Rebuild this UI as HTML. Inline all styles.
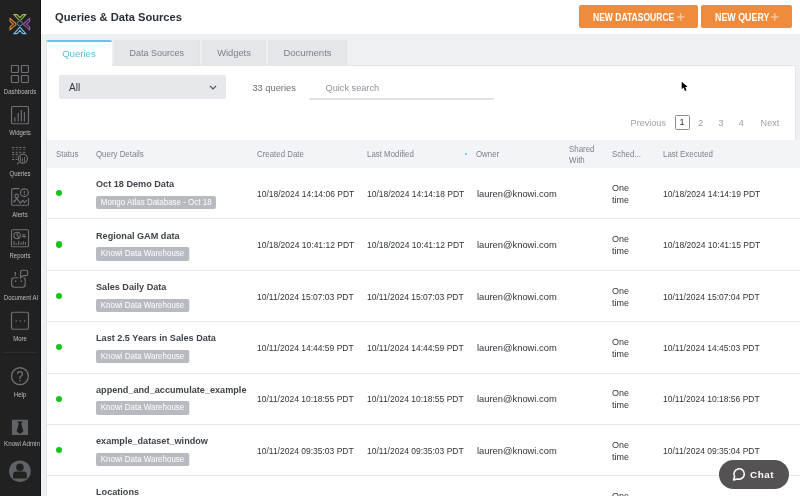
<!DOCTYPE html>
<html><head><meta charset="utf-8">
<style>
*{box-sizing:border-box;margin:0;padding:0}
html,body{width:800px;height:496px;overflow:hidden;background:#fff;font-family:"Liberation Sans",sans-serif;}
.abs{position:absolute}
#side{position:absolute;left:0;top:0;width:41px;height:496px;background:#212121}
.lbl{position:absolute;left:0;width:40px;text-align:center;color:#bdbdbd;font-size:6.6px;line-height:8px;white-space:nowrap;transform:scaleX(0.91)}
#hdr{position:absolute;left:41px;top:0;width:759px;height:34px;background:#fff}
#title{position:absolute;left:55px;top:8.6px;font-size:11.15px;font-weight:bold;color:#2b2f36;white-space:nowrap;line-height:16px}
.obtn{position:absolute;top:5.3px;height:23px;background:#ef8b3b;border-radius:2px;color:#fff;font-weight:bold;font-size:10.2px;line-height:26.8px;white-space:nowrap}
.obtn span.t{display:inline-block;transform:scaleX(0.838);transform-origin:0 50%}
.obtn .pl{color:#f6c39a;font-size:11px;font-weight:bold}
#band{position:absolute;left:41px;top:34px;width:759px;height:462px;background:#eef0f2}
#panel{position:absolute;left:45.9px;top:65px;width:749.9px;height:445px;background:#fff;border:1px solid #e2e4e8;border-radius:2px}
#pext{position:absolute;left:780px;top:140px;width:20px;height:356px;background:#fff}
.tab{position:absolute;top:40px;height:25px;background:#e5e6e9;color:#7b7f86;font-size:9px;line-height:25px;text-align:center;white-space:nowrap}
.tab{border-left:1px solid #e0e2e6;border-right:1px solid #e0e2e6}
.tab.act{background:#fff;color:#5bbce4;border-top:2px solid #6ac4ea;line-height:23px;height:26px;border-left:1px solid #e2e4e8;border-right:0;border-top-left-radius:2px;border-top-right-radius:2px}
#sel{position:absolute;left:59px;top:75.3px;width:166.5px;height:23.5px;background:#e7e8eb;border-radius:2px}
#thead{position:absolute;left:46.5px;top:140px;width:753.5px;height:28px;background:#f3f4f8}
.th{position:absolute;color:#7c8188;font-size:8.4px;line-height:10px;white-space:nowrap;transform:scaleX(0.94);transform-origin:0 0}
.rb{position:absolute;left:46.5px;width:753.5px;height:1px;background:#e6e8ec}
.dot{position:absolute;left:55.65px;width:6.3px;height:6.3px;border-radius:50%;background:#1ac41a}
.qt{position:absolute;left:96px;font-size:9.6px;font-weight:bold;color:#3f444b;white-space:nowrap;line-height:12px;transform:scaleX(0.95);transform-origin:0 0}
.badge{position:absolute;left:96px;height:13.5px;background:#b7bac1;border-radius:2px;color:#fff;font-size:8.4px;line-height:13.5px;padding:0 5.05px;white-space:nowrap;transform:scaleX(0.952);transform-origin:0 0}
.td{position:absolute;color:#30343a;font-size:8.85px;line-height:12px;white-space:nowrap;transform:scaleX(0.96);transform-origin:0 0}
.em{font-size:9.6px;transform:scaleX(0.975)}
.one{font-size:9.9px;line-height:11.8px;transform:scaleX(0.91)}
#chat{position:absolute;left:719px;top:459.6px;width:70px;height:29.2px;border-radius:15px;background:#545252;color:#fff;font-weight:bold;font-size:10.7px}
#root{position:absolute;left:0;top:0;width:800px;height:496px;overflow:hidden;will-change:transform}
</style></head><body><div id="root">
<div id="side"></div>
<div class="abs" style="left:40px;top:0;width:1px;height:496px;background:#141414"></div>
<svg class="abs" style="left:0;top:0" width="41" height="496" viewBox="0 0 41 496">
<!-- logo -->
<g fill="none" stroke-width="1.1" stroke-linejoin="miter" stroke-miterlimit="3">
 <path d="M14.00 14.60 H17.00 L19.85 17.74 L22.70 14.60 H25.70 L19.85 21.04 Z" stroke="#a3c14f"/>
 <path d="M10.10 18.40 V21.30 L13.24 24.10 L10.10 26.90 V29.80 L16.48 24.10 Z" stroke="#ef9030"/>
 <path d="M29.60 18.40 V21.30 L26.46 24.10 L29.60 26.90 V29.80 L23.22 24.10 Z" stroke="#9b5cb4"/>
 <path d="M14.00 33.60 H17.00 L19.85 30.46 L22.70 33.60 H25.70 L19.85 27.16 Z" stroke="#78c2e6"/>
 <circle cx="19.85" cy="23.5" r="3.3" fill="#212121" stroke="none"/>
 <circle cx="19.85" cy="23.4" r="2.5" stroke="#5a88a8" stroke-width="1"/>
</g>
<g fill="#6e7176"><!-- queries grid -->
 <g><rect x="12.1" y="147" width="2.1" height="1.1" opacity="1"/><rect x="15.7" y="147" width="2.1" height="1.1" opacity="1"/><rect x="19.3" y="147" width="2.1" height="1.1" opacity="1"/><rect x="23.2" y="147" width="2.1" height="1.1" opacity="1"/>
<rect x="12.1" y="149.2" width="2.1" height="1.1" opacity="0.55"/><rect x="15.7" y="149.2" width="2.1" height="1.1" opacity="0.55"/><rect x="19.3" y="149.2" width="2.1" height="1.1" opacity="0.55"/><rect x="23.2" y="149.2" width="2.1" height="1.1" opacity="0.55"/>
<rect x="12.1" y="151.8" width="2.1" height="1.1" opacity="1"/><rect x="15.7" y="151.8" width="2.1" height="1.1" opacity="1"/><rect x="19.3" y="151.8" width="2.1" height="1.1" opacity="1"/><rect x="23.2" y="151.8" width="2.1" height="1.1" opacity="1"/>
<rect x="12.1" y="153.9" width="2.1" height="1.1" opacity="1"/><rect x="15.7" y="153.9" width="2.1" height="1.1" opacity="1"/>
<rect x="12.1" y="156.2" width="2.1" height="1.1" opacity="0.55"/><rect x="15.7" y="156.2" width="2.1" height="1.1" opacity="0.55"/>
<rect x="12.1" y="158.9" width="2.1" height="1.1" opacity="1"/><rect x="15.7" y="158.9" width="2.1" height="1.1" opacity="1"/>
 </g></g>
<g fill="none" stroke="#6e7176" stroke-width="1.15">
 <!-- dashboards -->
 <rect x="11.4" y="65.5" width="7" height="7" rx="0.8"/>
 <rect x="21.4" y="65.5" width="7" height="7" rx="0.8"/>
 <rect x="11.4" y="75.5" width="7" height="7" rx="0.8"/>
 <rect x="21.4" y="75.5" width="7" height="7" rx="0.8"/>
 <!-- widgets -->
 <rect x="11.5" y="106.5" width="17" height="17.2" rx="1.3"/>
 <path d="M14.8 121.6 V117.3 M18.2 121.6 V112.9 M21.3 121.6 V110 M24.4 121.6 V112.2"/>
 <!-- queries magnifier -->
 <circle cx="22.9" cy="158.6" r="5.3" fill="#212121" stroke="none"/><circle cx="22.9" cy="158.6" r="4.55"/>
 <path d="M18.8 162.4 L17.1 164.4"/>
 <path d="M20.35 161.6 V156.2 M22.45 161.6 V158.4 M24.55 161.6 V157.1" stroke-width="1"/>
 <!-- alerts -->
 <path d="M19.5 188.6 H13 Q11.7 188.6 11.7 189.9 V203.9 Q11.7 205.2 13 205.2 H27.2 Q28.5 205.2 28.5 203.9 V197.8"/>
 <circle cx="24.4" cy="192.7" r="3.9"/>
 <path d="M24.4 190.9 V193.2 M24.4 194.1 V195"/>
 <circle cx="16.65" cy="195.9" r="1.8"/>
 <path d="M13.4 200.6 L14.5 201.9 L16.65 198.1 L20.3 203.2 L22.8 200.5 L24.5 202.6 L26.6 200.2"/>
 <!-- reports -->
 <rect x="11.5" y="229.7" width="17" height="17" rx="1.3"/>
 <circle cx="17.1" cy="235.4" r="3.2"/>
 <path d="M17.1 232.2 V235.4 L19.2 237.8 M22.2 234.9 H25.2 M22.2 236.6 H26"/>
 <path d="M14.1 244.8 V241.3 M16.2 244.8 V243 M18.6 244.8 V241.3 M21.1 244.8 V242.2 M23.3 244.8 V241.3 M25.4 244.8 V241.9" stroke-width="1.1"/>
 <!-- document ai -->
 <path d="M18.6 277.7 H14.3 Q11.6 277.7 11.6 280.4 V284.6 Q11.6 287.2 14.3 287.2 H22.5 Q25.2 287.2 25.2 284.6 V280.4 Q25.2 277.7 23.5 277.7"/>
 <path d="M15.3 272.6 V276" stroke-width="1.1"/><path d="M14.6 272.7 H16" stroke-width="1.2"/>
 <path d="M20.6 277.9 V271.5 Q20.6 270.2 21.9 270.2 H26.3 Q27.6 270.2 27.6 271.5 V274.3 Q27.6 275.6 26.3 275.6 H23.1 Z"/>
 <!-- more -->
 <rect x="11.5" y="312.2" width="17" height="17" rx="1.6"/>
 <!-- help -->
 <circle cx="19.95" cy="376.2" r="8.45" stroke-width="1.3"/>
 <path d="M17.5 374 Q17.5 371.7 19.9 371.7 Q22.4 371.7 22.4 373.9 Q22.4 375.4 20.9 376.3 Q19.9 377 19.9 378.2 V379" stroke-width="1.3"/>
</g>
<g fill="#6e7176">
 
 <rect x="15.5" y="320.3" width="1.3" height="1.3"/><rect x="19.5" y="320.3" width="1.3" height="1.3"/><rect x="24" y="320.3" width="1.3" height="1.3"/>
 <rect x="14.75" y="280.4" width="1.5" height="1.5"/><rect x="20.55" y="280.4" width="1.5" height="1.5"/>
 <circle cx="19.9" cy="380.7" r="0.8"/>
</g>
<!-- separator -->
<rect x="3" y="351.8" width="34" height="0.9" fill="#343434"/>
<!-- knowi admin -->
<rect x="11.9" y="419.7" width="16.1" height="15.3" fill="#5f6266"/>
<path d="M17.4 421.6 H22.6 L21.2 423.6 L23.3 431.2 L20 434 L16.7 431.2 L18.8 423.6 Z" fill="#1c1c1c"/>
<!-- avatar -->
<circle cx="19.9" cy="471.2" r="10.8" fill="#5f6266"/>
<circle cx="19.9" cy="467.2" r="3.8" fill="#212121"/>
<path d="M13 478.6 V474.8 Q13 471.4 16.4 471.4 H23.4 Q26.8 471.4 26.8 474.8 V478.6 Z" fill="#212121"/>
</svg>
<div class="lbl" style="top:88.0px">Dashboards</div>
<div class="lbl" style="top:129.1px">Widgets</div>
<div class="lbl" style="top:170.2px">Queries</div>
<div class="lbl" style="top:211.3px">Alerts</div>
<div class="lbl" style="top:252.4px">Reports</div>
<div class="lbl" style="top:293.5px;left:1.3px">Document AI</div>
<div class="lbl" style="top:334.6px">More</div>
<div class="lbl" style="top:390.8px">Help</div>
<div class="lbl" style="top:440.3px;left:1.6px;transform:scaleX(0.94)">Knowi Admin</div>
<div id="hdr"></div>
<div id="title">Queries &amp; Data Sources</div>
<div class="obtn" style="left:579px;width:119px;padding-left:13.8px"><span class="t">NEW DATASOURCE</span></div><svg class="abs" style="left:677px;top:13px" width="8" height="8"><path d="M3.7 0.2V7.8M0 4H7.5" stroke="#f7c49c" stroke-width="1.5"/></svg>
<div class="obtn" style="left:700.7px;width:91.2px;padding-left:14.4px"><span class="t" style="transform:scaleX(0.871)">NEW QUERY</span></div><svg class="abs" style="left:771px;top:13px" width="8" height="8"><path d="M3.7 0.2V7.8M0 4H7.5" stroke="#f7c49c" stroke-width="1.5"/></svg>
<div id="band"></div>
<div id="panel"></div>
<div id="pext"></div>
<div class="tab act" style="left:45.9px;width:66.1px;padding-right:1px;font-size:9.6px;padding-top:0px">Queries</div>
<div class="tab" style="left:114px;width:85.5px;font-size:9px;padding-top:1px">Data Sources</div>
<div class="tab" style="left:202px;width:64px;font-size:9.3px;padding-top:1px">Widgets</div>
<div class="tab" style="left:268px;width:79px;font-size:9.5px;padding-top:0px">Documents</div>
<div id="sel"></div>
<div id="thead"></div>

<div class="abs" style="left:252.4px;top:81.8px;font-size:9.3px;line-height:12px;color:#6c7178;white-space:nowrap">33 queries</div>
<div class="abs" style="left:325.5px;top:81.8px;font-size:9.2px;line-height:12px;color:#8e939a;white-space:nowrap">Quick search</div>
<div class="abs" style="left:308.75px;top:98.4px;width:185px;height:1.3px;background:#dfe2e7"></div>
<div class="abs" style="left:69px;top:82.2px;font-size:10px;line-height:12px;color:#2f3237">All</div>
<svg class="abs" style="left:209px;top:85px" width="8" height="5" viewBox="0 0 8 5"><path d="M1 1 L4 4 L7 1" fill="none" stroke="#50545a" stroke-width="1.1"/></svg>
<div class="abs" style="left:630.6px;top:116.5px;font-size:9.1px;line-height:12px;color:#9da1a7;white-space:nowrap">Previous</div>
<div class="abs" style="left:674.5px;top:115px;width:15.3px;height:14.8px;border:1px solid #8a8d92;border-radius:1.5px;font-size:9.1px;line-height:12.8px;color:#333;text-align:center">1</div>
<div class="abs" style="left:698.2px;top:116.5px;font-size:9.1px;line-height:12px;color:#9da1a7">2</div>
<div class="abs" style="left:718.6px;top:116.5px;font-size:9.1px;line-height:12px;color:#9da1a7">3</div>
<div class="abs" style="left:738.8px;top:116.5px;font-size:9.1px;line-height:12px;color:#9da1a7">4</div>
<div class="abs" style="left:760.6px;top:116.5px;font-size:9.1px;line-height:12px;color:#9da1a7">Next</div>
<div class="th" style="left:55.5px;top:149px">Status</div>
<div class="th" style="left:96px;top:149px">Query Details</div>
<div class="th" style="left:257px;top:149px">Created Date</div>
<div class="th" style="left:366.6px;top:149px">Last Modified</div>
<div class="abs" style="left:465px;top:152.8px;width:2px;height:2px;border-radius:50%;background:#5cc0ea"></div>
<div class="th" style="left:476.4px;top:149px">Owner</div>
<div class="th" style="left:569px;top:143.5px;line-height:11px">Shared<br>With</div>
<div class="th" style="left:612.3px;top:149px">Sched...</div>
<div class="th" style="left:662.5px;top:149px">Last Executed</div>
<!--ROWS-->
<div class="rb" style="top:218px"></div>
<div class="dot" style="top:190.10px"></div>
<div class="qt" style="top:178.25px">Oct 18 Demo Data</div>
<div class="badge" style="top:195.80px">Mongo Atlas Database - Oct 18</div>
<div class="td" style="left:257px;top:188.00px">10/18/2024 14:14:06 PDT</div>
<div class="td" style="left:367px;top:188.00px">10/18/2024 14:14:18 PDT</div>
<div class="td em" style="left:476.5px;top:188.00px">lauren@knowi.com</div>
<div class="td one" style="left:612.4px;top:182.00px">One<br>time</div>
<div class="td" style="left:662.5px;top:188.00px">10/18/2024 14:14:19 PDT</div>
<div class="rb" style="top:270px"></div>
<div class="dot" style="top:241.46px"></div>
<div class="qt" style="top:229.61px">Regional GAM data</div>
<div class="badge" style="top:247.16px">Knowi Data Warehouse</div>
<div class="td" style="left:257px;top:239.36px">10/18/2024 10:41:12 PDT</div>
<div class="td" style="left:367px;top:239.36px">10/18/2024 10:41:12 PDT</div>
<div class="td em" style="left:476.5px;top:239.36px">lauren@knowi.com</div>
<div class="td one" style="left:612.4px;top:233.36px">One<br>time</div>
<div class="td" style="left:662.5px;top:239.36px">10/18/2024 10:41:15 PDT</div>
<div class="rb" style="top:321px"></div>
<div class="dot" style="top:292.82px"></div>
<div class="qt" style="top:280.97px">Sales Daily Data</div>
<div class="badge" style="top:298.52px">Knowi Data Warehouse</div>
<div class="td" style="left:257px;top:290.72px">10/11/2024 15:07:03 PDT</div>
<div class="td" style="left:367px;top:290.72px">10/11/2024 15:07:03 PDT</div>
<div class="td em" style="left:476.5px;top:290.72px">lauren@knowi.com</div>
<div class="td one" style="left:612.4px;top:284.72px">One<br>time</div>
<div class="td" style="left:662.5px;top:290.72px">10/11/2024 15:07:04 PDT</div>
<div class="rb" style="top:373px"></div>
<div class="dot" style="top:344.18px"></div>
<div class="qt" style="top:332.33px">Last 2.5 Years in Sales Data</div>
<div class="badge" style="top:349.88px">Knowi Data Warehouse</div>
<div class="td" style="left:257px;top:342.08px">10/11/2024 14:44:59 PDT</div>
<div class="td" style="left:367px;top:342.08px">10/11/2024 14:44:59 PDT</div>
<div class="td em" style="left:476.5px;top:342.08px">lauren@knowi.com</div>
<div class="td one" style="left:612.4px;top:336.08px">One<br>time</div>
<div class="td" style="left:662.5px;top:342.08px">10/11/2024 14:45:03 PDT</div>
<div class="rb" style="top:424px"></div>
<div class="dot" style="top:395.54px"></div>
<div class="qt" style="top:383.69px">append_and_accumulate_example</div>
<div class="badge" style="top:401.24px">Knowi Data Warehouse</div>
<div class="td" style="left:257px;top:393.44px">10/11/2024 10:18:55 PDT</div>
<div class="td" style="left:367px;top:393.44px">10/11/2024 10:18:55 PDT</div>
<div class="td em" style="left:476.5px;top:393.44px">lauren@knowi.com</div>
<div class="td one" style="left:612.4px;top:387.44px">One<br>time</div>
<div class="td" style="left:662.5px;top:393.44px">10/11/2024 10:18:56 PDT</div>
<div class="rb" style="top:475px"></div>
<div class="dot" style="top:446.90px"></div>
<div class="qt" style="top:435.05px">example_dataset_window</div>
<div class="badge" style="top:452.60px">Knowi Data Warehouse</div>
<div class="td" style="left:257px;top:444.80px">10/11/2024 09:35:03 PDT</div>
<div class="td" style="left:367px;top:444.80px">10/11/2024 09:35:03 PDT</div>
<div class="td em" style="left:476.5px;top:444.80px">lauren@knowi.com</div>
<div class="td one" style="left:612.4px;top:438.80px">One<br>time</div>
<div class="td" style="left:662.5px;top:444.80px">10/11/2024 09:35:04 PDT</div>
<div class="qt" style="top:486.41px">Locations</div>
<div class="td one" style="left:612.4px;top:490.16px">One<br>time</div>
<!--/ROWS-->
<div id="chat"></div>
<svg class="abs" style="left:730px;top:465px" width="18" height="18" viewBox="730 465 18 18"><path d="M734.6 476.6 A5.2 5.2 0 1 1 737.4 478.9 L733.6 479.9 Z" fill="none" stroke="#fff" stroke-width="1.6" stroke-linejoin="round"/></svg>
<div class="abs" style="left:750.1px;top:468.5px;font-size:9.9px;font-weight:bold;color:#fff;line-height:12px;letter-spacing:0.5px">Chat</div>
<svg class="abs" style="left:680px;top:80px" width="10" height="12" viewBox="680 80 10 12"><path d="M681.7 81.8 L681.7 89.2 L683.6 87.6 L684.9 90.9 L686.5 90.3 L685.2 87.1 L687.7 87 Z" fill="#000"/></svg>
</div></body></html>
